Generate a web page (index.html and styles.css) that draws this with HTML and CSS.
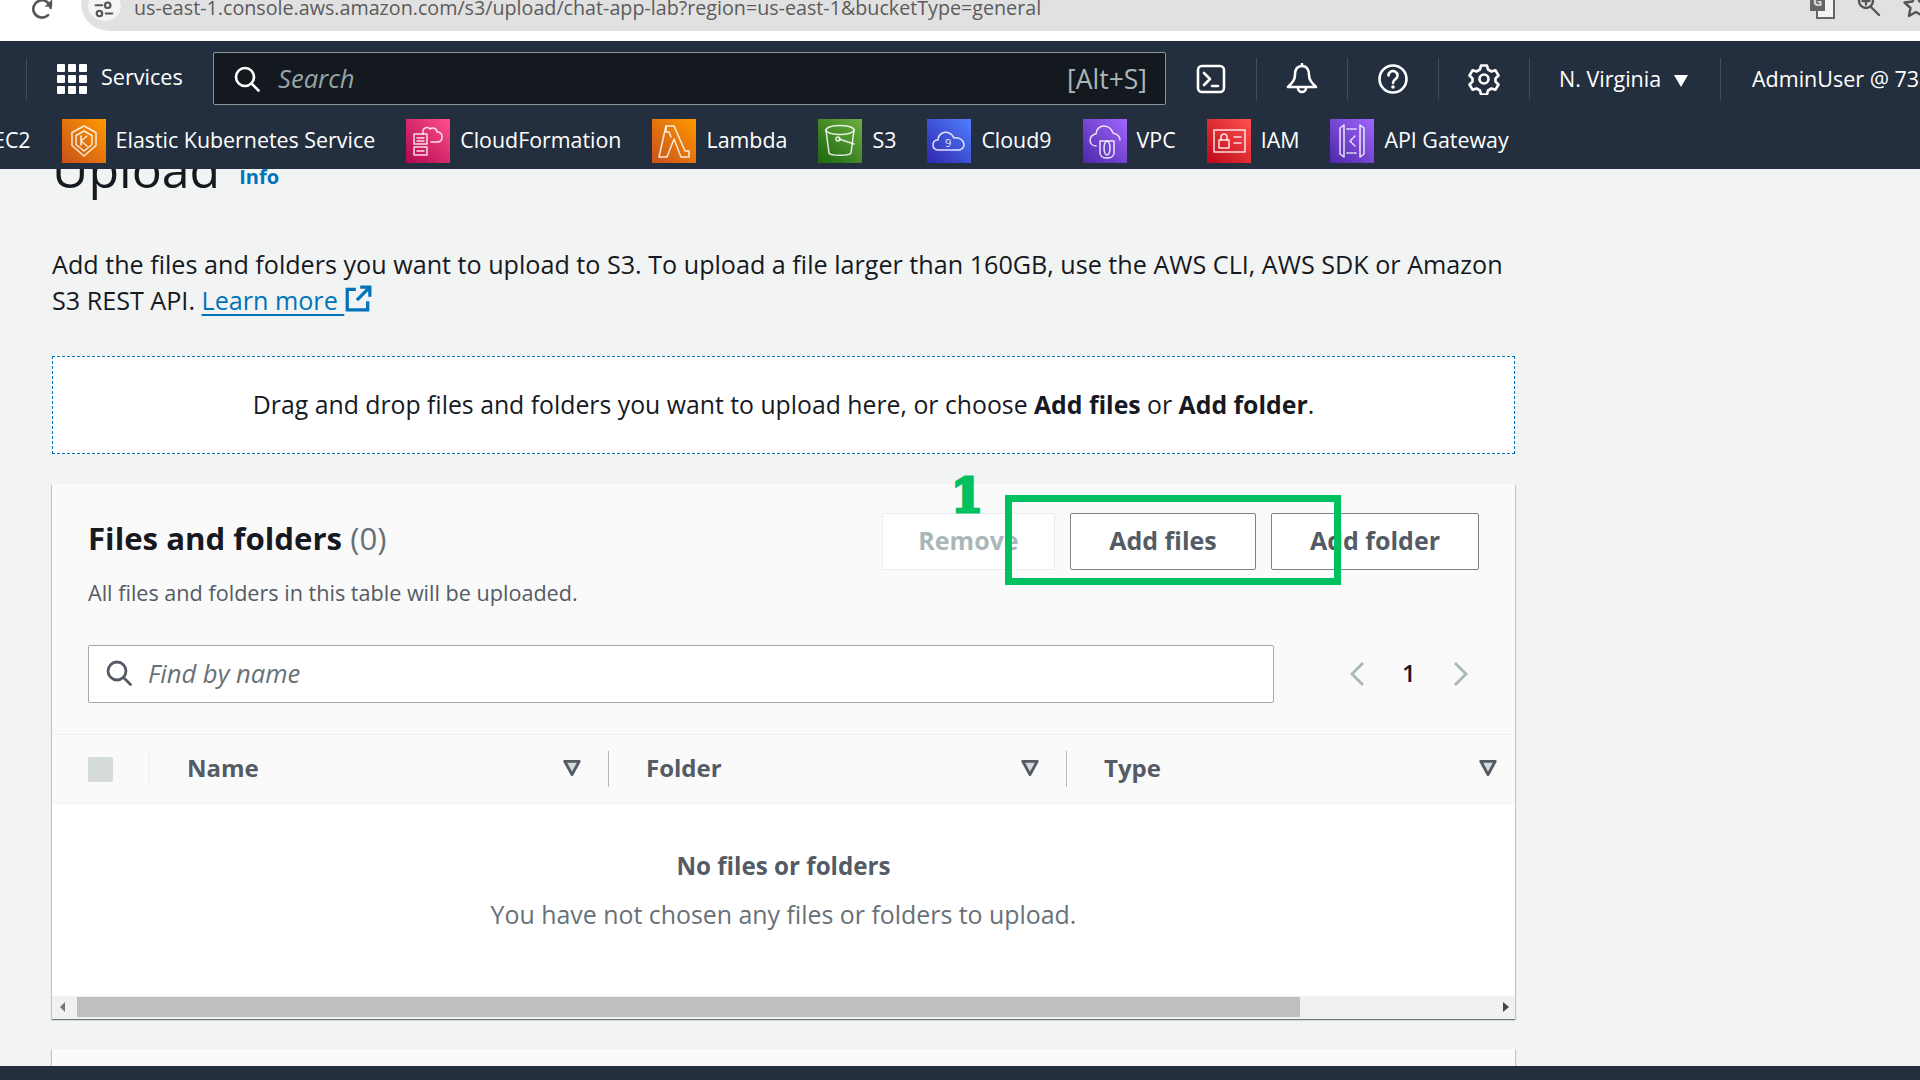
FILE: index.html
```html
<!DOCTYPE html>
<html lang="en">
<head>
<meta charset="UTF-8">
<meta name="viewport" content="width=device-width, initial-scale=1.0">
<title>Upload • S3</title>
<link rel="stylesheet" href="styles.css">
</head>
<body>

<!-- Browser address bar, cut off by the top of the picture -->
<div class="browser">
  <svg class="reload" viewBox="0 0 24 24"><path class="line-dark" d="M19 11a8 8 0 1 0-2.300 6.600"/><path class="fill-dark" d="M20.500 3v7h-7z"/></svg>
  <div class="address">
    <span class="tune">
      <svg viewBox="0 0 24 24"><path class="line-dark" d="M3 9h7M14 18h7"/><circle class="line-dark" cx="16" cy="9" r="3"/><circle class="line-dark" cx="7" cy="18" r="3"/></svg>
    </span>
    <span class="url">us-east-1.console.aws.amazon.com/s3/upload/chat-app-lab?region=us-east-1&amp;bucketType=general</span>
    <span class="browser-tools">
      <svg class="tool" viewBox="0 0 26 26"><rect x="8" y="5" width="17" height="20" fill="#f4f4f4" stroke="#666" stroke-width="2"/><rect x="1" y="-2" width="15" height="20" fill="#666"/><text x="4" y="13" class="tool-g">G</text></svg>
      <svg class="tool" viewBox="0 0 26 26"><circle class="line-dark" cx="10" cy="8" r="7"/><path class="line-dark" d="M15 14l8 8M10 4.500v7M6.500 8h7"/></svg>
      <svg class="tool" viewBox="0 0 26 26"><path class="line-dark" d="M13 1l3.500 7.500 8 1-6 5.500 1.600 8L13 19l-7.100 4 1.600-8-6-5.500 8-1z"/></svg>
    </span>
  </div>
</div>

<!-- AWS console top navigation -->
<header class="nav">
  <div class="nav-top">
    <span class="nav-sep first"></span>
    <svg class="grid-icon" viewBox="0 0 30 30">
      <rect class="fill-white" x="0" y="0" width="8" height="8" rx="1"/><rect class="fill-white" x="11" y="0" width="8" height="8" rx="1"/><rect class="fill-white" x="22" y="0" width="8" height="8" rx="1"/>
      <rect class="fill-white" x="0" y="11" width="8" height="8" rx="1"/><rect class="fill-white" x="11" y="11" width="8" height="8" rx="1"/><rect class="fill-white" x="22" y="11" width="8" height="8" rx="1"/>
      <rect class="fill-white" x="0" y="22" width="8" height="8" rx="1"/><rect class="fill-white" x="11" y="22" width="8" height="8" rx="1"/><rect class="fill-white" x="22" y="22" width="8" height="8" rx="1"/>
    </svg>
    <span class="services">Services</span>
    <div class="nav-search">
      <svg class="nav-search-icon" viewBox="0 0 28 28"><circle class="line-white" cx="12" cy="12" r="9"/><path class="line-white" d="M18.500 18.500l7 7"/></svg>
      <span class="nav-search-text">Search</span>
      <span class="nav-search-key">[Alt+S]</span>
    </div>
    <div class="nav-cell">
      <svg class="nav-icon" viewBox="0 0 32 32"><rect class="line-white" x="3" y="3" width="26" height="26" rx="4"/><path class="line-white" d="M9 10l6 6-6 6M17 23h6"/></svg>
    </div>
    <div class="nav-cell">
      <svg class="nav-icon" viewBox="0 0 32 32"><path class="line-white" d="M16 3c-5 0-7 4-7 9 0 5-3 8-7 12h28c-4-4-7-7-7-12 0-5-2-9-7-9z"/><path class="line-white" d="M12 25a4 4 0 0 0 8 0M16 1v2"/></svg>
    </div>
    <div class="nav-cell">
      <svg class="nav-icon" viewBox="0 0 32 32"><circle class="line-white" cx="16" cy="16" r="13.500"/><path class="line-white" d="M11.500 12.500a4.500 4.500 0 1 1 6.800 3.900c-1.500.9-2.300 1.700-2.300 3.600"/><circle class="fill-white" cx="16" cy="24" r="1.800"/></svg>
    </div>
    <div class="nav-cell">
      <svg class="nav-icon" viewBox="0 0 32 32"><path class="line-white" d="M13 2.500h6l1 4 3.500 2 4-1.200 3 5.200-3 2.900v3.200l3 2.900-3 5.200-4-1.200-3.500 2-1 4h-6l-1-4-3.500-2-4 1.200-3-5.200 3-2.900v-3.200l-3-2.900 3-5.200 4 1.200 3.500-2z"/><circle class="line-white" cx="16" cy="16" r="4.500"/></svg>
    </div>
    <div class="nav-region">N. Virginia <span class="caret"></span></div>
    <div class="nav-user">AdminUser @ 7381 2204 5511</div>
  </div>

  <div class="nav-favs">
    <span class="fav">EC2</span>
    <span class="fav">
      <span class="svc orange"><svg viewBox="0 0 44 44"><path class="line-thin" d="M22 7l12 6.500v13L22 37l-12-10.500v-13z"/><path class="line-thin" d="M22 12l8 4.500v9L22 32l-8-6.500v-9z"/><path class="line-thin" d="M19 17v9M25 17l-6 5 6 5"/></svg></span>
      Elastic Kubernetes Service
    </span>
    <span class="fav">
      <span class="svc pink"><svg viewBox="0 0 44 44"><path class="line-thin" d="M8 15h13v10H8zM8 28h13v8H8zM11 19h7M11 22h7M11 32h7"/><path class="line-thin" d="M17 15v-3c0-3 5-5 7-2 2-2 7-1 7 3 4 0 5 3 5 5 0 3-2 5-5 5h-6"/></svg></span>
      CloudFormation
    </span>
    <span class="fav">
      <span class="svc orange"><svg viewBox="0 0 44 44"><path class="line-thin" d="M14 7h8l11 25h4v6h-8L22 20l-7 18H7z"/><path class="line-thin" d="M14 7v6h3l2 5"/></svg></span>
      Lambda
    </span>
    <span class="fav">
      <span class="svc green"><svg viewBox="0 0 44 44"><ellipse class="line-thin" cx="22" cy="11" rx="14" ry="4.500"/><path class="line-thin" d="M8 11l3 23c1 3 21 3 22 0l3-23"/><path class="line-thin" d="M21 20l15 5"/><circle class="line-thin" cx="20" cy="20" r="2"/></svg></span>
      S3
    </span>
    <span class="fav">
      <span class="svc blue"><svg viewBox="0 0 44 44"><path class="line-thin" d="M12 31c-4 0-6-2-6-5s2-5 5-5c0-6 6-9 11-7 3 1 4 3 5 5 5-1 10 2 10 7 0 3-3 5-6 5z"/><text x="18" y="28" class="cloud-nine">9</text></svg></span>
      Cloud9
    </span>
    <span class="fav">
      <span class="svc purple"><svg viewBox="0 0 44 44"><path class="line-thin" d="M13 27c-4 0-6-3-6-6s3-6 6-6c0-5 4-8 8-8 5 0 8 4 9 7 4 1 7 3 7 7"/><path class="line-thin" d="M17 22h14v12c0 3-3 5-7 5s-7-2-7-5z"/><ellipse class="line-thin" cx="24" cy="29" rx="3" ry="7"/></svg></span>
      VPC
    </span>
    <span class="fav">
      <span class="svc red"><svg viewBox="0 0 44 44"><rect class="line-thin" x="7" y="11" width="31" height="22"/><rect class="line-thin" x="12" y="21" width="10" height="8"/><path class="line-thin" d="M14 21v-3a3 3 0 0 1 6 0v3M27 18h7M27 24h7"/></svg></span>
      IAM
    </span>
    <span class="fav">
      <span class="svc purple"><svg viewBox="0 0 44 44"><path class="line-thin" d="M14 6v32l-4-3V9zM30 6v32l4-3V9z"/><path class="line-thin" d="M25 17l-5 5 5 5M17 10h10M17 34h10" stroke-dasharray="2 1.500"/></svg></span>
      API Gateway
    </span>
  </div>
</header>

<main class="content">
  <div class="title-row">
    <h1>Upload</h1>
    <a class="info">Info</a>
  </div>

  <p class="intro">Add the files and folders you want to upload to S3. To upload a file larger than 160GB, use the AWS CLI, AWS SDK or Amazon S3 REST API. <a class="learn">Learn more </a><svg class="ext" viewBox="0 0 26 26"><path d="M11 4H3v19h19v-8M15 2h9v9M24 2L12 14"/></svg></p>

  <div class="dropzone">Drag and drop files and folders you want to upload here, or choose <b>Add files</b> or <b>Add folder</b>.</div>

  <section class="card">
    <div class="card-head">
      <div>
        <h2 class="card-title">Files and folders <span class="count">(0)</span></h2>
        <div class="card-sub">All files and folders in this table will be uploaded.</div>
      </div>
      <div class="actions">
        <button class="btn remove">Remove</button>
        <button class="btn add-files">Add files</button>
        <button class="btn add-folder">Add folder</button>
      </div>
    </div>

    <div class="find-row">
      <div class="find">
        <svg class="find-icon" viewBox="0 0 28 28"><circle class="line-grey" cx="12" cy="12" r="9"/><path class="line-grey" d="M18.500 18.500l7 7"/></svg>
        <span class="find-text">Find by name</span>
      </div>
      <div class="pager">
        <svg class="chev" viewBox="0 0 16 26"><path d="M14 2L3 13l11 11"/></svg>
        <span class="page-num">1</span>
        <svg class="chev" viewBox="0 0 16 26"><path d="M2 2l11 11L2 24"/></svg>
      </div>
    </div>

    <div class="table-head">
      <div class="check-col"><span class="check"></span></div>
      <div class="col">Name <svg class="filter" viewBox="0 0 18 18"><path d="M2.500 3h13L9 15z"/></svg></div>
      <div class="col">Folder <svg class="filter" viewBox="0 0 18 18"><path d="M2.500 3h13L9 15z"/></svg></div>
      <div class="col col-last">Type <svg class="filter" viewBox="0 0 18 18"><path d="M2.500 3h13L9 15z"/></svg></div>
    </div>

    <div class="empty">
      <div class="empty-title">No files or folders</div>
      <div class="empty-text">You have not chosen any files or folders to upload.</div>
    </div>

    <div class="scrollbar">
      <span class="arrow-left"></span>
      <span class="thumb"></span>
      <span class="arrow-right"></span>
    </div>
  </section>

  <section class="card next-card"></section>
</main>

<footer class="foot"></footer>

<!-- Green marking drawn over the screenshot -->
<div class="mark-box"></div>
<div class="mark-num">1</div>

</body>
</html>
```

FILE: styles.css
```css
/* ======  Base  ====== */
:root{
  --navy   : #232f3e;
  --page   : #f2f3f3;
  --ink    : #16191f;
  --grey   : #545b64;
  --muted  : #687078;
  --blue   : #0073bb;
  --green  : #00c060;
}

*{box-sizing:border-box;}
html,body{
  height:100%;
  margin:0;
  overflow:hidden;
}
body{
  position:relative;
  width:1920px;
  height:1080px;
  display:flex;
  flex-direction:column;
  background:var(--page);
  color:var(--ink);
  font-family:"Open Sans","Noto Sans",sans-serif;
}

/* ======  SVG helpers  ====== */
.line-white{fill:none;stroke:#fff;stroke-width:2.600;stroke-linecap:round;stroke-linejoin:round;}
.line-thin{fill:none;stroke:rgba(255,255,255,.85);stroke-width:1.500;stroke-linejoin:round;stroke-linecap:round;}
.line-dark{fill:none;stroke:#555;stroke-width:2.400;stroke-linecap:round;stroke-linejoin:round;}
.line-grey{fill:none;stroke:#545b64;stroke-width:2.800;stroke-linecap:round;}
.fill-white{fill:#fff;}
.fill-dark{fill:#555;}

/* ======  Browser bar  ====== */
.browser{
  flex:none;
  height:41px;
  display:flex;
  background:#fff;
  overflow:hidden;
}
.reload{
  flex:none;
  width:26px;
  height:26px;
  margin:-4px 0 0 30px;
}
.address{
  flex:1;
  height:31px;
  margin-left:25px;
  padding-left:7px;
  display:flex;
  align-items:flex-start;
  background:#e1e1e1;
  border-radius:0 0 0 28px;
}
.tune{
  flex:none;
  width:33px;
  height:30px;
  margin-top:-9px;
  padding:6px 0 0 5px;
  background:#f4f4f4;
  border-radius:50%;
}
.tune svg{display:block;width:22px;height:22px;}
.url{
  margin:-6px 0 0 13px;
  font-size:19.700px;
  line-height:28px;
  color:#5b5b5b;
  white-space:nowrap;
}
.browser-tools{
  margin-left:auto;
  display:flex;
  gap:21px;
  margin-top:-7px;
  margin-right:-9px;
}
.tool{width:26px;height:26px;}
.tool-g{font:700 13px "Open Sans",sans-serif;fill:#ddd;}

/* ======  AWS nav  ====== */
.nav{
  flex:none;
  height:128px;
  background:var(--navy);
  color:#fff;
  overflow:hidden;
}
.nav-top{
  height:64px;
  padding-top:11px;
  display:flex;
  align-items:flex-start;
}
.nav-sep{
  flex:none;
  width:1px;
  height:42px;
  margin-top:6px;
  background:#414d5c;
}
.nav-sep.first{margin-left:26px;}
.grid-icon{
  flex:none;
  width:30px;
  height:30px;
  margin:12px 0 0 30px;
}
.services{
  flex:none;
  width:112px;
  margin-left:14px;
  font-size:21.600px;
  line-height:50px;
}
.nav-search{
  flex:none;
  width:953px;
  height:53px;
  padding:0 18px 0 19px;
  display:flex;
  align-items:center;
  background:#14181f;
  border:1px solid #879596;
  border-radius:2px;
}
.nav-search-icon{width:28px;height:28px;}
.nav-search-text{
  margin-left:17px;
  font-size:25.600px;
  font-style:italic;
  color:#95a5a6;
}
.nav-search-key{
  margin-left:auto;
  font-size:26.500px;
  color:#aab7b8;
}
.nav-cell{
  flex:none;
  width:91px;
  height:42px;
  margin-top:6px;
  display:flex;
  justify-content:center;
  align-items:center;
  border-right:1px solid #414d5c;
}
.nav-icon{width:32px;height:32px;}
.nav-region{
  flex:none;
  width:191px;
  height:42px;
  margin-top:6px;
  padding-left:29px;
  font-size:21.500px;
  line-height:42px;
  border-right:1px solid #414d5c;
  white-space:nowrap;
}
.caret{
  display:inline-block;
  margin-left:7px;
  border-left:7px solid transparent;
  border-right:7px solid transparent;
  border-top:12px solid #fff;
}
.nav-user{
  flex:none;
  margin-top:6px;
  padding-left:31px;
  font-size:21.500px;
  line-height:42px;
  white-space:nowrap;
}

.nav-favs{
  height:64px;
  padding-top:14px;
  margin-left:-7px;
  display:flex;
  gap:31px;
  white-space:nowrap;
}
.fav{
  flex:none;
  height:42px;
  display:flex;
  align-items:flex-start;
  gap:10px;
  font-size:21.400px;
  line-height:42px;
}
.svc{
  flex:none;
  width:44px;
  height:44px;
}
.svc svg{display:block;width:44px;height:44px;}
.orange{background:linear-gradient(45deg,#c8511b,#ff9900);}
.pink{background:linear-gradient(45deg,#b0084d,#ff4f8b);}
.green{background:linear-gradient(45deg,#1b660f,#6cae3e);}
.blue{background:linear-gradient(45deg,#2e27ad,#527fff);}
.purple{background:linear-gradient(45deg,#4d27a8,#a166ff);}
.red{background:linear-gradient(45deg,#bd0816,#ff5252);}
.cloud-nine{font:400 11px "Open Sans",sans-serif;fill:#fff;opacity:.85;}

/* ======  Page content  ====== */
.content{
  flex:1;
  min-height:0;
  padding:0 405px 0 52px;
  overflow:hidden;
}
.title-row{
  display:flex;
  align-items:flex-start;
  gap:19px;
  height:111px;
  margin-top:-34px;
}
h1{
  margin:0;
  font-size:50px;
  font-weight:400;
  line-height:68px;
}
.info{
  margin-top:27px;
  font-size:20px;
  font-weight:700;
  line-height:30px;
  color:var(--blue);
}
.intro{
  margin:0;
  font-size:25.150px;
  line-height:36px;
  color:var(--ink);
}
.learn{
  color:var(--blue);
  text-decoration:underline;
  text-decoration-thickness:2px;
  text-underline-offset:4px;
}
.ext{
  width:28px;
  height:28px;
  vertical-align:-3px;
  fill:none;
  stroke:var(--blue);
  stroke-width:3;
}
.dropzone{
  height:98px;
  margin-top:38px;
  text-align:center;
  line-height:94px;
  background:#fff;
  border:1px dashed var(--blue);
  font-size:24.800px;
}

/* ======  Files card  ====== */
.card{
  margin-top:30px;
  background:#fafafa;
  box-shadow:0 1px 1px rgba(0,28,36,.4),1px 1px 1px rgba(0,28,36,.15),-1px 1px 1px rgba(0,28,36,.15);
}
.card-head{
  padding:29px 36px 0;
  display:flex;
  justify-content:space-between;
}
.card-title{
  margin:0;
  font-size:31.200px;
  font-weight:700;
  line-height:50px;
}
.count{font-weight:400;color:var(--muted);}
.card-sub{
  margin-top:15px;
  margin-bottom:1px;
  font-size:21.600px;
  line-height:30px;
  color:var(--grey);
}
.actions{
  display:flex;
  gap:15px;
  height:57px;
}
.btn{
  height:57px;
  padding:0 0 3px;
  background:#fff;
  border:1.500px solid #7d8287;
  border-radius:2px;
  font:700 25px "Open Sans","Noto Sans",sans-serif;
  color:var(--grey);
}
.remove{
  width:173px;
  border-color:#eaeded;
  color:#aab7b8;
}
.add-files{width:186px;}
.add-folder{width:208px;}

.find-row{
  margin-top:36px;
  padding:0 36px;
  display:flex;
}
.find{
  flex:none;
  width:1186px;
  height:58px;
  padding:0 0 2px 16px;
  display:flex;
  align-items:center;
  gap:15px;
  background:#fff;
  border:1.500px solid #a5a9ad;
  border-radius:2px;
}
.find-icon{width:28px;height:28px;}
.find-text{
  font-size:25.600px;
  font-style:italic;
  color:var(--muted);
}
.pager{
  flex:1;
  padding-left:74px;
  display:flex;
  align-items:center;
  gap:36px;
}
.chev{
  width:18px;
  height:26px;
  fill:none;
  stroke:#aab7b8;
  stroke-width:2.800;
}
.page-num{
  padding-bottom:3px;
  font-size:24px;
  font-weight:600;
}

/* ======  Table  ====== */
.table-head{
  height:70px;
  margin-top:31px;
  padding-left:36px;
  display:grid;
  grid-template-columns:62px 458px 458px 1fr;
  align-items:center;
  border-top:1px solid #f0f0f0;
  border-bottom:1px solid #f4f4f4;
}
.check-col{
  height:36px;
  display:flex;
  align-items:center;
  border-right:1px solid #eeeeee;
}
.check{
  width:25px;
  height:25px;
  background:#d5dbdb;
  border-radius:2px;
}
.col{
  height:36px;
  padding:0 26px 3px 37px;
  display:flex;
  justify-content:space-between;
  align-items:center;
  border-left:1px solid #b5babe;
  font-size:24px;
  font-weight:700;
  color:var(--grey);
}
.check-col + .col{border-left:none;}
.col-last{padding-right:17px;}
.filter{
  width:20px;
  height:20px;
  fill:#d5dbdb;
  stroke:var(--grey);
  stroke-width:2.600;
  stroke-linejoin:round;
}
.empty{
  height:192px;
  padding-top:44px;
  text-align:center;
  background:#fff;
}
.empty-title{
  font-size:24.200px;
  font-weight:700;
  line-height:36px;
  color:var(--grey);
}
.empty-text{
  margin-top:12px;
  font-size:24.900px;
  line-height:36px;
  color:var(--muted);
}
.scrollbar{
  height:23px;
  padding:1px 6px 2px 8px;
  display:flex;
  align-items:center;
  background:#f1f1f1;
}
.thumb{
  width:1223px;
  height:20px;
  margin-left:12px;
  background:#bfbfbf;
}
.arrow-left{
  border-top:5px solid transparent;
  border-bottom:5px solid transparent;
  border-right:5px solid #777;
}
.arrow-right{
  margin-left:auto;
  border-top:5px solid transparent;
  border-bottom:5px solid transparent;
  border-left:6px solid #444;
}
.next-card{height:60px;}

.foot{
  flex:none;
  height:14px;
  background:var(--navy);
}

/* ======  Green marking  ====== */
.mark-box{
  position:absolute;
  left:1005px;
  top:495px;
  width:336px;
  height:90px;
  border:7px solid var(--green);
}
.mark-num{
  position:absolute;
  left:951px;
  top:466px;
  font:700 46px "DejaVu Serif",serif;
  line-height:60px;
  color:var(--green);
  -webkit-text-stroke:3px var(--green);
}
```
